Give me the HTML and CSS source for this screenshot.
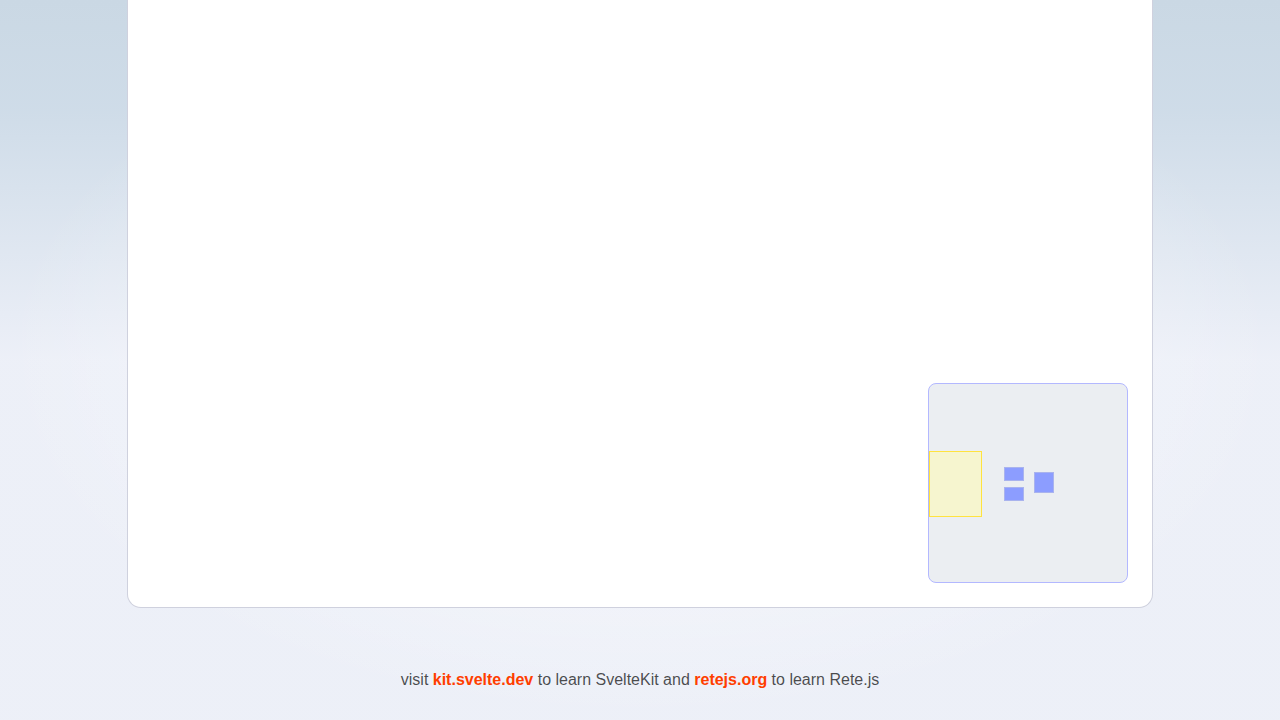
FILE: index.html
```html
<!DOCTYPE html>
<html lang="en">
<head>
<meta charset="utf-8">
<title>Rete.js + SvelteKit</title>
<link rel="stylesheet" href="styles.css">
</head>
<body>
<div class="app">
  <main class="main">
    <div class="editor">
      <div class="minimap">
        <div class="mini-viewport"></div>
        <div class="mini-nodes">
          <div class="mini-col">
            <div class="mini-node small"></div>
            <div class="mini-node small"></div>
          </div>
          <div class="mini-node big"></div>
        </div>
      </div>
    </div>
  </main>
  <footer class="footer">
    <p>visit <a href="#">kit.svelte.dev</a> to learn SvelteKit and <a href="#">retejs.org</a> to learn Rete.js</p>
  </footer>
</div>
</body>
</html>
```

FILE: styles.css
```css
html, body {
  margin: 0;
  padding: 0;
}
body {
  min-height: 100vh;
  font-family: Arial, "Liberation Sans", sans-serif;
  color: rgba(0, 0, 0, 0.7);
  background-color: hsl(209, 36%, 86%);
  background-attachment: fixed;
  background-size: 100vw 100vh;
  background-image:
    radial-gradient(50% 50% at 50% 50%, rgba(255, 255, 255, 0.75) 0%, rgba(255, 255, 255, 0) 100%),
    linear-gradient(180deg, rgb(202, 216, 228) 0%, hsl(209, 36%, 86%) 15%, hsl(224, 44%, 95%) 50%);
}
.app {
  display: flex;
  flex-direction: column;
  min-height: 100vh;
}
.main {
  display: flex;
  justify-content: center;
}
.editor {
  position: relative;
  box-sizing: border-box;
  width: 1026px;
  height: 608px;
  background: #fff;
  border: 1px solid #cfd1de;
  border-top: none;
  border-radius: 0 0 14px 14px;
}
.minimap {
  position: absolute;
  right: 24px;
  bottom: 24px;
  box-sizing: border-box;
  width: 200px;
  height: 200px;
  background: #ebeef2;
  border: 1px solid #b3b8ff;
  border-radius: 8px;
  overflow: hidden;
}
.mini-viewport {
  position: absolute;
  left: 0;
  top: 67px;
  box-sizing: border-box;
  width: 53px;
  height: 66px;
  background: rgba(255, 251, 178, 0.55);
  border: 1px solid #ffe33f;
}
.mini-nodes {
  position: absolute;
  left: 75px;
  top: 83px;
  display: flex;
  align-items: flex-start;
  gap: 10px;
}
.mini-col {
  display: flex;
  flex-direction: column;
  gap: 6px;
}
.mini-node {
  box-sizing: border-box;
  background: #8c9dff;
  border: 1px solid #a9b3ee;
}
.mini-node.small {
  width: 20px;
  height: 14px;
}
.mini-node.big {
  width: 20px;
  height: 21px;
  margin-top: 5px;
}
.footer {
  display: flex;
  justify-content: center;
  padding: 63px 12px 12px;
}
.footer p {
  margin: 0;
  font-size: 16px;
  line-height: 18px;
}
.footer a {
  color: #ff3e00;
  font-weight: bold;
  text-decoration: none;
}
```
